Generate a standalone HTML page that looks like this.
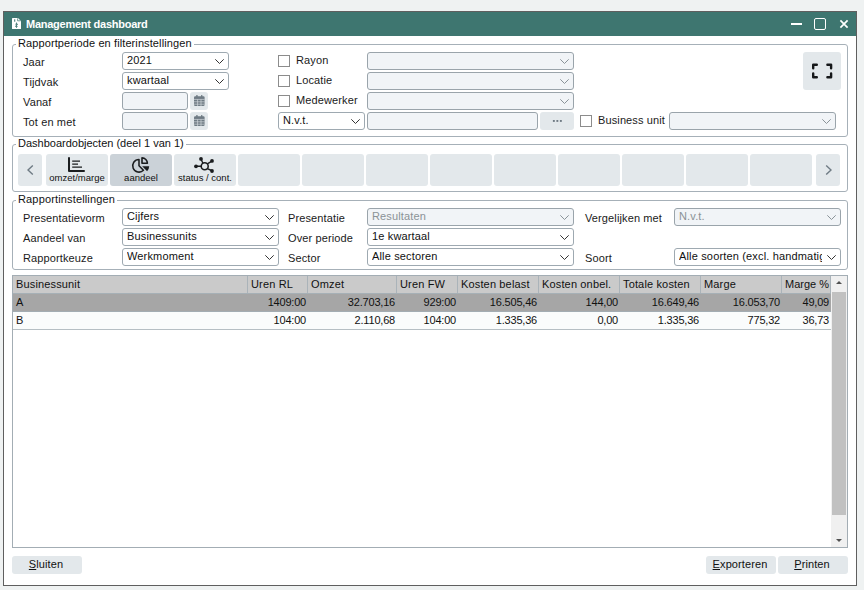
<!DOCTYPE html>
<html><head><meta charset="utf-8">
<style>
*{box-sizing:border-box;margin:0;padding:0}
html,body{width:864px;height:590px;overflow:hidden;background:#eff2f2;font-family:"Liberation Sans",sans-serif;font-size:11px;color:#1a1a1a}
.a{position:absolute}
#win{position:absolute;left:3px;top:11px;width:854px;height:575px;border:1px solid #5f5f5f;background:#fff}
#title{position:absolute;left:4px;top:12px;width:852px;height:24px;background:#3e7670}
.tt{position:absolute;left:26px;top:17px;color:#fff;font-weight:bold;font-size:11px;letter-spacing:-0.25px;line-height:14px}
.fs{position:absolute;border:1px solid #a6b0b8;border-radius:3px}
.lg{position:absolute;background:#fff;padding:0 2px;line-height:13px;color:#111}
.lbl{position:absolute;line-height:13px;color:#1a1a1a;white-space:nowrap;letter-spacing:0.12px}
.sel{position:absolute;height:18px;border:1px solid #9ea9b1;border-radius:3px;background:#fff;line-height:15px;padding-left:4px;white-space:nowrap;overflow:hidden;color:#111}
.sel .st{display:block;width:calc(100% - 18px);overflow:hidden;letter-spacing:0.15px}
.sel.dis{background:#f1f4f7;border-color:#9aa4ab;color:#8a9296}
.chev{position:absolute;right:4px;top:6px;width:9px;height:5px}
.inp{position:absolute;border:1px solid #9aa4ab;border-radius:3px;background:#f1f4f7}
.cb{position:absolute;width:12px;height:12px;border:1px solid #8c8c8c;background:#fff}
.btn{position:absolute;background:#e3e8eb;border-radius:3px}
.bb{text-align:center;line-height:17px;color:#111;padding-right:2px;letter-spacing:0.1px}
.bb u{text-decoration:underline;text-decoration-thickness:1px;text-underline-offset:0.5px}
.db{position:absolute;top:154px;width:62px;height:32px;background:#e3e8eb;border-radius:3px}
.db.on{background:#cbd2d8}
.dbt{position:absolute;left:0;width:62px;text-align:center;top:18px;font-size:9.5px;line-height:11px;color:#111}
.th{position:absolute;top:276px;height:17px;line-height:16px;padding-left:3px;border-right:1px solid #aab3b9;color:#111;white-space:nowrap;overflow:hidden;letter-spacing:0.15px}
.td{position:absolute;height:18px;line-height:18px;text-align:right;padding-right:1px;color:#111;white-space:nowrap;letter-spacing:-0.2px}
</style></head><body>
<div id="win"></div>
<div id="title"></div>
<svg class="a" style="left:12px;top:18px" width="9" height="11" viewBox="0 0 9 11"><path d="M0 0.6 Q0 0 0.6 0 H6 L9 3 V10.4 Q9 11 8.4 11 H0.6 Q0 11 0 10.4Z" fill="#fff"/><rect x="2" y="1.3" width="1.3" height="2.4" fill="#3e7670" opacity="0.8"/><path d="M5.6 0.3 V2.8 H8.7" stroke="#3e7670" stroke-width="0.9" fill="none" opacity="0.8"/><path d="M4.5 4.5 V9.8 M3.3 6.3 Q4.5 5.2 5.7 6.3 Q4.5 7.4 3.3 8.3 Q4.5 9.4 5.7 8.3" stroke="#3e7670" stroke-width="1" fill="none" opacity="0.8"/></svg>
<div class="tt">Management dashboard</div>
<div class="a" style="left:791px;top:23px;width:11px;height:2px;background:#fff"></div>
<div class="a" style="left:814px;top:18px;width:12px;height:12px;border:1.8px solid #fff;border-radius:2px"></div>
<svg class="a" style="left:839px;top:19px" width="10" height="10" viewBox="0 0 10 10"><path d="M1.4 1.4 L8.6 8.6 M8.6 1.4 L1.4 8.6" stroke="#fff" stroke-width="1.7"/></svg>
<div class="fs" style="left:12px;top:44px;width:836px;height:93px"></div>
<div class="lg" style="left:16px;top:37px;letter-spacing:0.1px">Rapportperiode en filterinstellingen</div>
<div class="lbl" style="left:23px;top:56px">Jaar</div>
<div class="lbl" style="left:23px;top:76px">Tijdvak</div>
<div class="lbl" style="left:23px;top:96px">Vanaf</div>
<div class="lbl" style="left:23px;top:116px">Tot en met</div>
<div class="sel" style="left:122px;top:52px;width:107px;height:18px"><span class="st">2021</span><svg class="chev" viewBox="0 0 9 5"><path d="M0.3 0.3 L4.5 4.5 L8.7 0.3" stroke="#333" stroke-width="1" fill="none"/></svg></div>
<div class="sel" style="left:122px;top:72px;width:107px;height:18px"><span class="st">kwartaal</span><svg class="chev" viewBox="0 0 9 5"><path d="M0.3 0.3 L4.5 4.5 L8.7 0.3" stroke="#333" stroke-width="1" fill="none"/></svg></div>
<div class="inp" style="left:122px;top:92px;width:66px;height:18px"></div>
<div class="inp" style="left:122px;top:112px;width:66px;height:18px"></div>
<div class="btn" style="left:190px;top:92px;width:18px;height:18px"></div>
<div class="btn" style="left:190px;top:112px;width:18px;height:18px"></div>
<svg class="a" style="left:194px;top:95px" width="11" height="11" viewBox="0 0 11 11"><rect x="0" y="1.3" width="10.6" height="9.7" rx="1.2" fill="#6f7b84"/><rect x="2.2" y="0" width="1.4" height="2.6" rx="0.5" fill="#6f7b84"/><rect x="7" y="0" width="1.4" height="2.6" rx="0.5" fill="#6f7b84"/><path d="M0 4.4 H10.6 M0 6.8 H10.6 M0 9.2 H10.6 M3.6 4.4 V11 M7 4.4 V11" stroke="#e3e8eb" stroke-width="0.7" opacity="0.85"/></svg><svg class="a" style="left:194px;top:115px" width="11" height="11" viewBox="0 0 11 11"><rect x="0" y="1.3" width="10.6" height="9.7" rx="1.2" fill="#6f7b84"/><rect x="2.2" y="0" width="1.4" height="2.6" rx="0.5" fill="#6f7b84"/><rect x="7" y="0" width="1.4" height="2.6" rx="0.5" fill="#6f7b84"/><path d="M0 4.4 H10.6 M0 6.8 H10.6 M0 9.2 H10.6 M3.6 4.4 V11 M7 4.4 V11" stroke="#e3e8eb" stroke-width="0.7" opacity="0.85"/></svg><div class="cb" style="left:278px;top:55px"></div>
<div class="lbl" style="left:296px;top:54px">Rayon</div>
<div class="sel dis" style="left:367px;top:52px;width:207px;height:18px"><span class="st"></span><svg class="chev" viewBox="0 0 9 5"><path d="M0.3 0.3 L4.5 4.5 L8.7 0.3" stroke="#8a9399" stroke-width="1" fill="none"/></svg></div>
<div class="cb" style="left:278px;top:75px"></div>
<div class="lbl" style="left:296px;top:74px">Locatie</div>
<div class="sel dis" style="left:367px;top:72px;width:207px;height:18px"><span class="st"></span><svg class="chev" viewBox="0 0 9 5"><path d="M0.3 0.3 L4.5 4.5 L8.7 0.3" stroke="#8a9399" stroke-width="1" fill="none"/></svg></div>
<div class="cb" style="left:278px;top:95px"></div>
<div class="lbl" style="left:296px;top:94px">Medewerker</div>
<div class="sel dis" style="left:367px;top:92px;width:207px;height:18px"><span class="st"></span><svg class="chev" viewBox="0 0 9 5"><path d="M0.3 0.3 L4.5 4.5 L8.7 0.3" stroke="#8a9399" stroke-width="1" fill="none"/></svg></div>
<div class="sel" style="left:278px;top:112px;width:87px;height:18px"><span class="st">N.v.t.</span><svg class="chev" viewBox="0 0 9 5"><path d="M0.3 0.3 L4.5 4.5 L8.7 0.3" stroke="#333" stroke-width="1" fill="none"/></svg></div>
<div class="inp" style="left:367px;top:112px;width:171px;height:18px"></div>
<div class="btn" style="left:540px;top:112px;width:34px;height:18px"></div>
<svg class="a" style="left:550px;top:118px" width="14" height="6" viewBox="0 0 14 6"><rect x="2.9" y="2" width="1.9" height="1.9" fill="#6f7b84"/><rect x="6.4" y="2" width="1.9" height="1.9" fill="#6f7b84"/><rect x="9.9" y="2" width="1.9" height="1.9" fill="#6f7b84"/></svg>
<div class="cb" style="left:580px;top:115px"></div>
<div class="lbl" style="left:598px;top:114px">Business unit</div>
<div class="sel dis" style="left:669px;top:112px;width:167px;height:18px"><span class="st"></span><svg class="chev" viewBox="0 0 9 5"><path d="M0.3 0.3 L4.5 4.5 L8.7 0.3" stroke="#8a9399" stroke-width="1" fill="none"/></svg></div>
<div class="btn" style="left:803px;top:52px;width:38px;height:38px"></div>
<svg class="a" style="left:812px;top:63px" width="21" height="16" viewBox="0 0 21 16"><path d="M1.2 5.3 V1.8 H4.8 M15.4 1.8 H19.1 V5.3 M19.1 10.5 V14.2 H15.4 M4.8 14.2 H1.2 V10.5" stroke="#151719" stroke-width="2.4" fill="none" stroke-linecap="round" stroke-linejoin="round"/></svg>
<div class="fs" style="left:12px;top:144px;width:836px;height:48px"></div>
<div class="lg" style="left:16px;top:137px">Dashboardobjecten (deel 1 van 1)</div>
<div class="db" style="left:18px;width:24px"></div>
<svg class="a" style="left:27px;top:165px" width="7" height="10" viewBox="0 0 7 10"><path d="M5.8 0.5 L1 5 L5.8 9.5" stroke="#6f7b84" stroke-width="1.4" fill="none"/></svg>
<div class="db" style="left:46px"><div class="dbt">omzet/marge</div></div>
<div class="db on" style="left:110px"><div class="dbt">aandeel</div></div>
<div class="db" style="left:174px"><div class="dbt">status / cont.</div></div>
<div class="db" style="left:238px"></div>
<div class="db" style="left:302px"></div>
<div class="db" style="left:366px"></div>
<div class="db" style="left:430px"></div>
<div class="db" style="left:494px"></div>
<div class="db" style="left:558px"></div>
<div class="db" style="left:622px"></div>
<div class="db" style="left:686px"></div>
<div class="db" style="left:750px"></div>
<div class="db" style="left:816px;width:24px"></div>
<svg class="a" style="left:825px;top:165px" width="7" height="10" viewBox="0 0 7 10"><path d="M1.2 0.5 L6 5 L1.2 9.5" stroke="#6f7b84" stroke-width="1.4" fill="none"/></svg>
<svg class="a" style="left:67px;top:157px" width="18" height="16" viewBox="0 0 18 16"><path d="M2 1 V14 H17" stroke="#1b1d1f" stroke-width="2" fill="none" stroke-linejoin="round" stroke-linecap="round"/><path d="M5.2 4.1 H13 M5.2 7.2 H11 M5.2 10.2 H15" stroke="#1b1d1f" stroke-width="1.3"/></svg>
<svg class="a" style="left:128px;top:154px" width="26" height="22" viewBox="0 0 26 22"><path d="M11 5.5 A6.3 6.3 0 1 0 15.45 16.25 L11 11.8 Z" stroke="#1b1d1f" stroke-width="1.55" fill="none" stroke-linejoin="round"/><path d="M14 9.3 V3.9 A5.4 5.4 0 0 1 19.4 9.3 Z" stroke="#1b1d1f" stroke-width="1.6" fill="none" stroke-linejoin="round"/><path d="M14.2 12.3 H21.2 A7 7 0 0 1 19.1 17.2 Z" fill="#1b1d1f"/></svg>
<svg class="a" style="left:190px;top:154px" width="26" height="22" viewBox="0 0 26 22"><circle cx="14.7" cy="12.3" r="3.5" stroke="#1b1d1f" stroke-width="1.6" fill="none"/><path d="M7 12.3 H11.2 M11.2 5.5 L12.9 9.3 M21.5 7.3 L17.3 9.9 M21.5 16.5 L17.3 14.6" stroke="#1b1d1f" stroke-width="1.4"/><circle cx="6" cy="12.3" r="1.9" fill="#1b1d1f"/><circle cx="11" cy="4.9" r="1.9" fill="#1b1d1f"/><circle cx="22" cy="6.9" r="1.9" fill="#1b1d1f"/><circle cx="22" cy="17" r="1.9" fill="#1b1d1f"/></svg>
<div class="fs" style="left:12px;top:200px;width:836px;height:70px"></div>
<div class="lg" style="left:16px;top:193px;letter-spacing:0.15px">Rapportinstellingen</div>
<div class="lbl" style="left:23px;top:212px">Presentatievorm</div>
<div class="lbl" style="left:23px;top:232px">Aandeel van</div>
<div class="lbl" style="left:23px;top:252px">Rapportkeuze</div>
<div class="sel" style="left:122px;top:208px;width:157px;height:18px"><span class="st">Cijfers</span><svg class="chev" viewBox="0 0 9 5"><path d="M0.3 0.3 L4.5 4.5 L8.7 0.3" stroke="#333" stroke-width="1" fill="none"/></svg></div>
<div class="sel" style="left:122px;top:228px;width:157px;height:18px"><span class="st">Businessunits</span><svg class="chev" viewBox="0 0 9 5"><path d="M0.3 0.3 L4.5 4.5 L8.7 0.3" stroke="#333" stroke-width="1" fill="none"/></svg></div>
<div class="sel" style="left:122px;top:248px;width:157px;height:18px"><span class="st">Werkmoment</span><svg class="chev" viewBox="0 0 9 5"><path d="M0.3 0.3 L4.5 4.5 L8.7 0.3" stroke="#333" stroke-width="1" fill="none"/></svg></div>
<div class="lbl" style="left:288px;top:212px">Presentatie</div>
<div class="lbl" style="left:288px;top:232px">Over periode</div>
<div class="lbl" style="left:288px;top:252px">Sector</div>
<div class="sel dis" style="left:367px;top:208px;width:207px;height:18px"><span class="st">Resultaten</span><svg class="chev" viewBox="0 0 9 5"><path d="M0.3 0.3 L4.5 4.5 L8.7 0.3" stroke="#8a9399" stroke-width="1" fill="none"/></svg></div>
<div class="sel" style="left:367px;top:228px;width:207px;height:18px"><span class="st">1e kwartaal</span><svg class="chev" viewBox="0 0 9 5"><path d="M0.3 0.3 L4.5 4.5 L8.7 0.3" stroke="#333" stroke-width="1" fill="none"/></svg></div>
<div class="sel" style="left:367px;top:248px;width:207px;height:18px"><span class="st">Alle sectoren</span><svg class="chev" viewBox="0 0 9 5"><path d="M0.3 0.3 L4.5 4.5 L8.7 0.3" stroke="#333" stroke-width="1" fill="none"/></svg></div>
<div class="lbl" style="left:585px;top:212px">Vergelijken met</div>
<div class="lbl" style="left:585px;top:252px">Soort</div>
<div class="sel dis" style="left:674px;top:208px;width:167px;height:18px"><span class="st">N.v.t.</span><svg class="chev" viewBox="0 0 9 5"><path d="M0.3 0.3 L4.5 4.5 L8.7 0.3" stroke="#8a9399" stroke-width="1" fill="none"/></svg></div>
<div class="sel" style="left:674px;top:248px;width:167px;height:18px"><span class="st"><span style="letter-spacing:0.16px">Alle soorten (excl. handmatig</span></span><svg class="chev" viewBox="0 0 9 5"><path d="M0.3 0.3 L4.5 4.5 L8.7 0.3" stroke="#333" stroke-width="1" fill="none"/></svg></div>
<div class="a" style="left:12px;top:275px;width:836px;height:273px;border:1px solid #a3adb4;background:#fff"></div>
<div class="a" style="left:13px;top:276px;width:818px;height:17px;background:#cacaca"></div>
<div class="a" style="left:13px;top:293px;width:818px;height:1px;background:#a6b0b6"></div>
<div class="a" style="left:13px;top:294px;width:818px;height:17px;background:#a6a6a6"></div>
<div class="a" style="left:13px;top:311px;width:818px;height:1px;background:#a3adb3"></div>
<div class="a" style="left:13px;top:312px;width:818px;height:17px;background:#fafcfc"></div>
<div class="a" style="left:13px;top:329px;width:818px;height:1px;background:#b6bfc4"></div>
<div class="th" style="left:13px;width:235px;padding-left:3px">Businessunit</div>
<div class="th" style="left:247px;width:61px;padding-left:4px">Uren RL</div>
<div class="th" style="left:307px;width:90px;padding-left:4px">Omzet</div>
<div class="th" style="left:396px;width:62px;padding-left:4px">Uren FW</div>
<div class="th" style="left:457px;width:82px;padding-left:4px">Kosten belast</div>
<div class="th" style="left:538px;width:82px;padding-left:4px">Kosten onbel.</div>
<div class="th" style="left:619px;width:82px;padding-left:4px">Totale kosten</div>
<div class="th" style="left:700px;width:82px;padding-left:4px">Marge</div>
<div class="th" style="left:781px;width:50px;padding-left:4px;letter-spacing:0">Marge %</div>
<div class="td" style="left:16px;top:293px;text-align:left">A</div>
<div class="td" style="left:247px;top:293px;width:60px">1409:00</div>
<div class="td" style="left:307px;top:293px;width:89px">32.703,16</div>
<div class="td" style="left:396px;top:293px;width:61px">929:00</div>
<div class="td" style="left:457px;top:293px;width:81px">16.505,46</div>
<div class="td" style="left:538px;top:293px;width:81px">144,00</div>
<div class="td" style="left:619px;top:293px;width:81px">16.649,46</div>
<div class="td" style="left:700px;top:293px;width:81px">16.053,70</div>
<div class="td" style="left:781px;top:293px;width:49px">49,09</div>
<div class="td" style="left:16px;top:311px;text-align:left">B</div>
<div class="td" style="left:247px;top:311px;width:60px">104:00</div>
<div class="td" style="left:307px;top:311px;width:89px">2.110,68</div>
<div class="td" style="left:396px;top:311px;width:61px">104:00</div>
<div class="td" style="left:457px;top:311px;width:81px">1.335,36</div>
<div class="td" style="left:538px;top:311px;width:81px">0,00</div>
<div class="td" style="left:619px;top:311px;width:81px">1.335,36</div>
<div class="td" style="left:700px;top:311px;width:81px">775,32</div>
<div class="td" style="left:781px;top:311px;width:49px">36,73</div>
<div class="a" style="left:831px;top:276px;width:16px;height:271px;background:#f0f0f0"></div>
<div class="a" style="left:832px;top:292px;width:14px;height:223px;background:#c1c1c1"></div>
<svg class="a" style="left:835.5px;top:281px" width="6" height="3"><path d="M0 3 L3 0 L6 3Z" fill="#505050"/></svg>
<svg class="a" style="left:835.5px;top:539px" width="6" height="3"><path d="M0 0 L3 3 L6 0Z" fill="#505050"/></svg>
<div class="btn bb" style="left:12px;top:556px;width:70px;height:18px"><u>S</u>luiten</div>
<div class="btn bb" style="left:706px;top:556px;width:70px;height:18px"><u>E</u>xporteren</div>
<div class="btn bb" style="left:778px;top:556px;width:70px;height:18px"><u>P</u>rinten</div>
</body></html>
